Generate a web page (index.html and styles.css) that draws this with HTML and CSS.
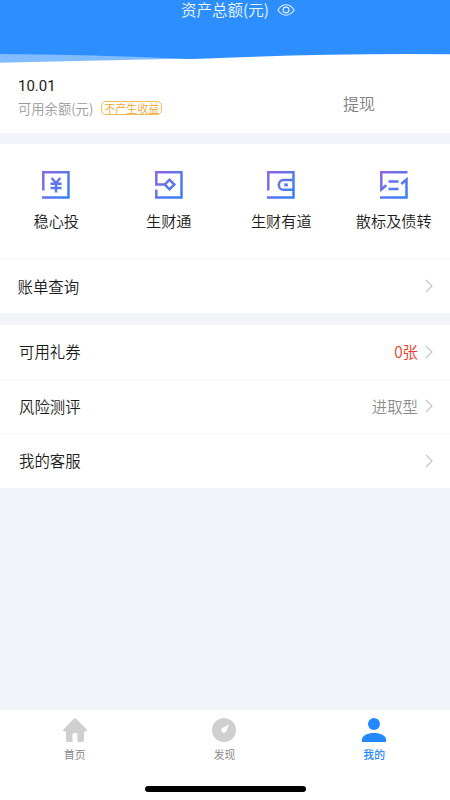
FILE: index.html
```html
<!DOCTYPE html>
<html lang="zh-CN">
<head>
<meta charset="utf-8">
<title>我的</title>
<link rel="stylesheet" href="styles.css">
</head>
<body>
<svg class="defs" width="0" height="0" aria-hidden="true">
  <defs>
    <linearGradient id="violet" gradientUnits="userSpaceOnUse" x1="2" y1="2" x2="24" y2="24">
      <stop offset="0" stop-color="#8a68de"/>
      <stop offset="1" stop-color="#3a80f8"/>
    </linearGradient>
  </defs>
</svg>
<div class="app">
  <header class="hero">
    <svg class="wave" viewBox="0 0 450 64" preserveAspectRatio="none">
      <path fill="#82bbff" d="M0 50H225V58Q110 60 0 62.800Z"/>
      <path fill="#2d8eff" d="M0 0H450V54.300Q340 53.300 240 57.300L190 59Q90 54.500 0 54Z"/>
    </svg>
    <div class="total">
      <span>资产总额(元)</span>
      <svg class="eye" viewBox="0 0 18 12" fill="none" stroke="#e4f0ff" stroke-width="1.1">
        <path d="M.8 6C3.500 2.200 6 .8 9 .8S14.500 2.200 17.200 6C14.500 9.800 12 11.200 9 11.200S3.500 9.800.8 6Z"/>
        <circle cx="9" cy="6" r="2.900"/>
      </svg>
    </div>
  </header>

  <section class="balance">
    <div>
      <div class="amount">10.01</div>
      <div class="caption"><span>可用余额(元)</span><span class="tag">不产生收益</span></div>
    </div>
    <a class="withdraw">提现</a>
  </section>

  <section class="card">
    <nav class="products">
      <a class="product">
        <svg viewBox="0 0 28 28" fill="none" stroke="url(#violet)" stroke-width="2.500">
          <path d="M1.300 19.500V1.300H26.500V26.500H0"/>
          <path d="M9.700 7l4.300 5 4.300-5M8.500 12.800H19.500M8.500 17H19.500M14 12V21.500" stroke-width="2.500"/>
        </svg>
        <span>稳心投</span>
      </a>
      <a class="product">
        <svg viewBox="0 0 28 28" fill="none" stroke="url(#violet)" stroke-width="2.500">
          <path d="M9 13.500H1.300V1.300H26.500V26.500H1.300V18.500"/>
          <path d="M14.500 8.700L19.300 13.500L14.500 18.300L9.700 13.500Z"/>
        </svg>
        <span>生财通</span>
      </a>
      <a class="product">
        <svg viewBox="0 0 28 28" fill="none" stroke="url(#violet)" stroke-width="2.500">
          <path d="M1.300 19.500V1.300H26.500V26.500H0"/>
          <path d="M26.500 9H16.500C10.300 9 10.300 18.800 16.500 18.800H26.500"/>
          <path d="M17.300 13.900H20.800" stroke-width="3"/>
        </svg>
        <span>生财有道</span>
      </a>
      <a class="product">
        <svg viewBox="0 0 28 28" fill="none" stroke="url(#violet)" stroke-width="2.500">
          <path d="M27.500 1.300H1.300V18.500L6.200 14.300"/>
          <path d="M0 26.500H26.500V8.500L21.300 13"/>
          <path d="M8.500 10.500H18.500M8.500 18H18.500"/>
        </svg>
        <span>散标及债转</span>
      </a>
    </nav>
    <a class="row bill"><span class="label">账单查询</span><svg class="chevron" viewBox="0 0 8 14"><path d="M1 1l6 6-6 6"/></svg></a>
  </section>

  <section class="card list">
    <a class="row"><span class="label">可用礼券</span><span class="value red">0张</span><svg class="chevron" viewBox="0 0 8 14"><path d="M1 1l6 6-6 6"/></svg></a>
    <a class="row"><span class="label">风险测评</span><span class="value">进取型</span><svg class="chevron" viewBox="0 0 8 14"><path d="M1 1l6 6-6 6"/></svg></a>
    <a class="row"><span class="label">我的客服</span><svg class="chevron" viewBox="0 0 8 14"><path d="M1 1l6 6-6 6"/></svg></a>
  </section>

  <footer class="tabbar">
    <nav class="tabs">
      <a class="tab">
        <svg viewBox="0 0 24 24" fill="#cfcfcf"><path d="M11 .6Q12 0 13 .6L23.600 11.500Q24.300 13.300 22.500 13.500H21V22Q21 24 19 24H14.500V16.500Q14.500 15 13 15H11Q9.500 15 9.500 16.500V24H5Q3 24 3 22V13.500H1.500Q-.3 13.300.4 11.500Z"/></svg>
        <span>首页</span>
      </a>
      <a class="tab">
        <svg viewBox="0 0 24 24"><circle cx="12" cy="12" r="12" fill="#cfcfcf"/><path fill="#fff" d="M17 6.500L14.400 13.200A2.700 2.700 0 1 1 10.300 9.900Z"/></svg>
        <span>发现</span>
      </a>
      <a class="tab active">
        <svg viewBox="0 0 24 24" fill="#2489fc"><circle cx="12" cy="6" r="6"/><path d="M0 24V21.500C0 17.500 5.500 15 12 15S24 17.500 24 21.500V24Z"/></svg>
        <span>我的</span>
      </a>
    </nav>
    <div class="home-indicator"></div>
  </footer>
</div>
</body>
</html>
```

FILE: styles.css
```css
* { box-sizing: border-box; }

body {
  margin: 0;
  font-family: "Noto Sans CJK SC", sans-serif;
  font-weight: 350;
  color: #1c1c1c;
  background: #f3f4f9;
}

.defs { display: block; }

.app {
  width: 450px;
  height: 800px;
  display: flex;
  flex-direction: column;
  overflow: hidden;
}

.hero {
  height: 64px;
  flex: none;
  display: grid;
  background: #fff;
}

.hero > * { grid-area: 1 / 1; }

.wave { width: 450px; height: 64px; display: block; }

.total {
  display: flex;
  align-items: center;
  gap: 8px;
  height: 19px;
  padding-left: 181px;
  font-size: 15.5px;
  line-height: 19px;
  color: #f0f7ff;
}

.eye { width: 18px; height: 12px; }

.balance {
  height: 69px;
  flex: none;
  display: flex;
  justify-content: space-between;
  padding: 12px 75px 0 18px;
  background: #fff;
}

.amount {
  font-family: Roboto, sans-serif;
  font-weight: 400;
  font-size: 15px;
  line-height: 21px;
}

.caption {
  display: flex;
  align-items: center;
  gap: 8px;
  height: 22px;
  font-size: 13.3px;
  color: #999;
}

.tag {
  height: 14px;
  padding: 0 2px;
  border: 1px solid #f3bb5a;
  border-radius: 5px;
  font-size: 11px;
  line-height: 12px;
  color: #f3a52a;
}

.withdraw {
  font-size: 16px;
  line-height: 24px;
  padding-top: 15px;
  color: #808080;
}

.card {
  flex: none;
  margin-top: 11px;
  background: #fff;
}

.products {
  height: 114px;
  display: grid;
  grid-template-columns: repeat(4, 1fr);
  padding-top: 27px;
}

.product {
  display: flex;
  flex-direction: column;
  align-items: center;
  gap: 9px;
  font-size: 15.2px;
  line-height: 24px;
}

.product svg { width: 28px; height: 28px; }

.row {
  display: flex;
  align-items: center;
  height: 54.5px;
  padding: 0 17px 0 19px;
  border-top: 1px solid #f6f6f7;
  font-size: 15.4px;
}

.bill { height: 55px; padding-left: 17.5px; }

.list { margin-top: 12px; }

.list .row:first-child { height: 53.5px; border-top: 0; }

.label,
.value { padding-bottom: 1px; }

.label { flex: 1; }

.value { color: #8e8e8e; margin-right: 7px; }

.red { color: #f03c28; }

.chevron {
  width: 8px;
  height: 14px;
  fill: none;
  stroke: #c6c6c6;
  stroke-width: 1.2;
}

.tabbar {
  height: 90px;
  flex: none;
  margin-top: auto;
  background: #fff;
}

.tabs {
  width: 449px;
  height: 78px;
  display: grid;
  grid-template-columns: repeat(3, 1fr);
  padding-top: 8px;
}

.tab {
  display: flex;
  flex-direction: column;
  align-items: center;
  gap: 4px;
  font-size: 10.8px;
  line-height: 16px;
  font-weight: 400;
  color: #888;
}

.tab svg { width: 24px; height: 24px; }

.active { color: #2489fc; font-weight: 500; }

.home-indicator {
  width: 161px;
  height: 6px;
  margin: -2.500px auto 0;
  border-radius: 3px;
  background: #000;
}
```
